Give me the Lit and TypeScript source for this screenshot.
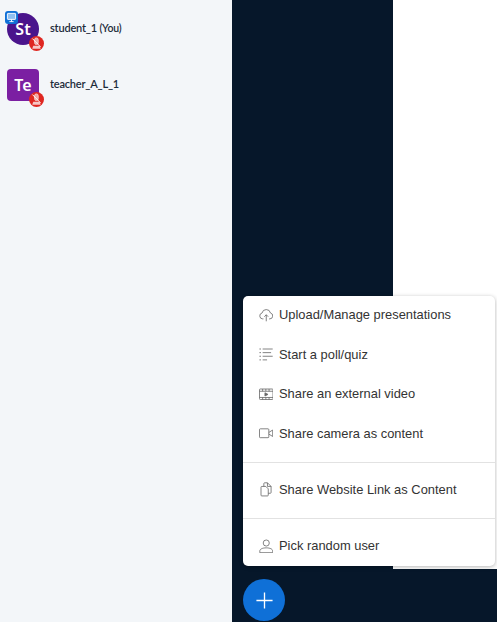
import { LitElement, css, html, svg } from "lit";
import { customElement } from "lit/decorators.js";

const icons = {
  upload: svg`<path d="M5.5 13.5H4.5A3.7 3.7 0 0 1 3.8 6.2 5.3 5.3 0 0 1 14.2 6.2 3.7 3.7 0 0 1 13.5 13.5H12.5"/><path d="M9 16.5V8.5M6.6 10.8 9 8.4 11.4 10.8"/>`,
  poll: svg`<path d="M0.5 2.5H2.5M4.5 2.5H17M0.5 7H2.5M4.5 7H15M0.5 11.5H2.5M4.5 11.5H17M0.5 16H2.5M4.5 16H10"/>`,
  video: svg`<rect x="0.6" y="2.5" width="16.8" height="13" rx="1"/><path d="M0.6 5.3H17.4M0.6 13H17.4M4.5 2.5V5.3M8.5 2.5V5.3M12.5 2.5V5.3M4.5 13V15.5M8.5 13V15.5M12.5 13V15.5"/><path d="M7.4 7.2 11.2 9.2 7.4 11.2Z" fill="#666"/>`,
  camera: svg`<rect x="0.6" y="3.5" width="11.6" height="11" rx="1"/><path d="M12.2 8 17 5V13L12.2 10"/>`,
  link: svg`<path d="M3.5 5.5H8.5L11.5 8.5V16.3A1 1 0 0 1 10.5 17.3H3.5A1 1 0 0 1 2.5 16.3V6.5A1 1 0 0 1 3.5 5.5Z"/><path d="M6 5.5V2A1 1 0 0 1 7 1H10.5L15 5.5V13A1 1 0 0 1 14 14H11.5"/><path d="M10.5 1V5.5H15"/>`,
  user: svg`<circle cx="9" cy="5" r="3.8"/><path d="M1 17V15C1 12.4 4.5 11 9 11S17 12.4 17 15V17Z"/>`,
};

const topItems = [
  { icon: icons.upload, label: "Upload/Manage presentations" },
  { icon: icons.poll, label: "Start a poll/quiz" },
  { icon: icons.video, label: "Share an external video" },
  { icon: icons.camera, label: "Share camera as content" },
];

@customElement("app-root")
export default class AppRoot extends LitElement {
  private renderItem(item: { icon: unknown; label: string }) {
    return html`
      <div class="item">
        <svg class="icon" viewBox="0 0 18 18">${item.icon}</svg>
        <span>${item.label}</span>
      </div>
    `;
  }

  private renderMuted() {
    return html`
      <span class="muted">
        <svg viewBox="0 0 14 14">
          <rect class="mic" x="5.2" y="1.8" width="3.4" height="6.2" rx="1.7" />
          <path class="base" d="M4 9H9.8L11 12H3Z" />
          <path class="slash" d="M3.2 2.4 10.8 10.2" />
        </svg>
      </span>
    `;
  }

  private renderUser(name: string, initials: string, you: boolean) {
    return html`
      <div class="user">
        <div class="avatar ${you ? "round" : "square"}">
          ${initials}
          ${you
            ? html`<span class="presenter">
                <svg viewBox="0 0 13 13">
                  <rect x="2.4" y="2.4" width="8.2" height="6" rx="0.6" />
                  <path d="M4.4 10.6H8.6M6.5 8.4V10.6" />
                </svg>
              </span>`
            : ""}
          ${this.renderMuted()}
        </div>
        <div class="name">${name}${you ? html` <small>(You)</small>` : ""}</div>
      </div>
    `;
  }

  protected override render() {
    return html`
      <aside>
        ${this.renderUser("student_1", "St", true)}
        ${this.renderUser("teacher_A_L_1", "Te", false)}
      </aside>
      <main>
        <div class="slide"></div>
        <div class="menu">
          <div class="group first">${topItems.map((item) => this.renderItem(item))}</div>
          <div class="group single">
            ${this.renderItem({ icon: icons.link, label: "Share Website Link as Content" })}
          </div>
          <div class="group last">
            ${this.renderItem({ icon: icons.user, label: "Pick random user" })}
          </div>
        </div>
        <button class="fab" aria-label="Actions">
          <svg viewBox="0 0 20 20"><path d="M10 1.5V18.5M1.5 10H18.5" /></svg>
        </button>
      </main>
    `;
  }

  static override styles = css`
    :host {
      display: flex;
      width: 497px;
      height: 622px;
      overflow: hidden;
      font-family: "Liberation Sans", Arial, sans-serif;
    }
    aside {
      width: 232px;
      flex: none;
      box-sizing: border-box;
      padding: 13px 0 0 7px;
      background: #f3f6f9;
      display: flex;
      flex-direction: column;
      gap: 24px;
    }
    .user {
      display: flex;
      align-items: center;
      gap: 11px;
      height: 32px;
    }
    .avatar {
      position: relative;
      width: 32px;
      height: 32px;
      display: flex;
      align-items: center;
      justify-content: center;
      color: #fff;
      font: 600 16px "Noto Sans", sans-serif;
    }
    .round {
      border-radius: 50%;
      background: #4a148c;
    }
    .square {
      border-radius: 4px;
      background: #7b1fa2;
    }
    .presenter {
      position: absolute;
      left: -2px;
      top: -2px;
      width: 13px;
      height: 13px;
      border-radius: 3px;
      background: #0f70d7;
      display: flex;
    }
    .presenter svg {
      width: 13px;
      height: 13px;
      fill: #8fc0f2;
      stroke: #fff;
      stroke-width: 0.9;
    }
    .muted {
      position: absolute;
      right: -5px;
      bottom: -6px;
      width: 15px;
      height: 15px;
      border-radius: 50%;
      background: #df2721;
      display: flex;
    }
    .muted svg {
      width: 15px;
      height: 15px;
    }
    .mic {
      fill: #f0a5a2;
      stroke: #fbe3e2;
      stroke-width: 0.7;
    }
    .base {
      fill: #f7c6c4;
    }
    .slash {
      stroke: #fff;
      stroke-width: 0.9;
      fill: none;
    }
    .name {
      font: 600 11px Lato, sans-serif;
      letter-spacing: -0.2px;
      color: #1c2b3a;
      margin-top: -3px;
    }
    .name small {
      font-size: 10.5px;
    }
    main {
      flex: 1;
      position: relative;
      background: #06172a;
      display: flex;
      justify-content: flex-end;
      align-items: flex-start;
    }
    .slide {
      width: 104px;
      height: 569px;
      background: #fff;
    }
    .menu {
      position: absolute;
      left: 11px;
      top: 296px;
      width: 252px;
      height: 270px;
      background: #fff;
      border-radius: 5px;
      box-shadow: 0 1px 4px rgba(0, 0, 0, 0.3);
      color: #333;
      font-size: 12.9px;
    }
    .group {
      display: flex;
      flex-direction: column;
      border-bottom: 1px solid #e2e2e2;
    }
    .group.first {
      margin-top: -1px;
      padding-bottom: 9px;
    }
    .group.single {
      height: 56px;
      box-sizing: border-box;
      padding-top: 6.5px;
    }
    .group.last {
      border-bottom: 0;
      padding-top: 7px;
    }
    .item {
      height: 39.5px;
      display: flex;
      align-items: center;
      gap: 6px;
      padding-left: 15.5px;
    }
    .icon {
      width: 14.5px;
      height: 14.5px;
      flex: none;
      fill: none;
      stroke: #666;
      stroke-width: 1;
    }
    .fab {
      position: absolute;
      left: 11px;
      top: 579px;
      width: 42px;
      height: 42px;
      padding: 0;
      border: 0;
      border-radius: 50%;
      background: #0f70d7;
      display: flex;
      align-items: center;
      justify-content: center;
    }
    .fab svg {
      width: 19px;
      height: 19px;
      stroke: #fff;
      stroke-width: 1.4;
      fill: none;
    }
  `;
}
